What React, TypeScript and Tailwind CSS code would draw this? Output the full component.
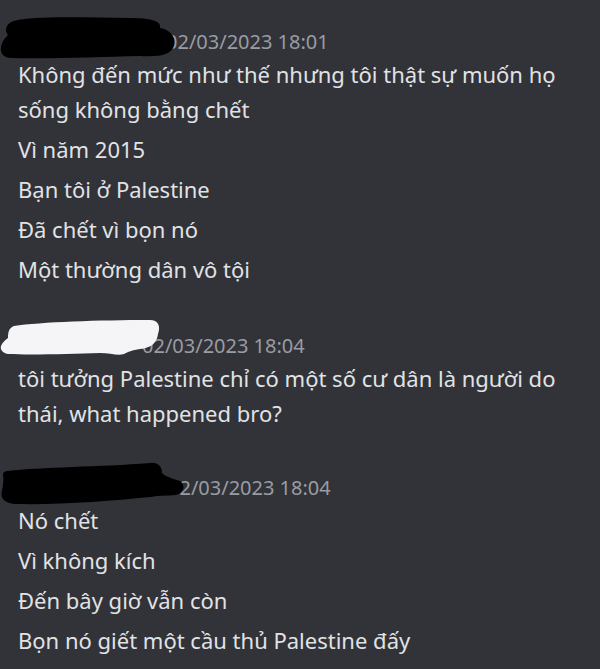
import React from "react";

const font = { fontFamily: '"Noto Sans", "Open Sans", sans-serif' };

function Blob1() {
  return (
    <svg className="absolute left-0 top-[-12px]" width="180" height="46" viewBox="0 0 180 46">
      <path
        d="M14 6 C30 1 80 2 130 3 C150 3 162 6 160 13 C168 14 176 20 174 30 C172 40 160 42 140 41 C100 42 50 44 12 43 C3 43 0 38 1 32 C2 26 6 22 8 20 C4 16 6 8 14 6 Z"
        fill="#000"
      />
    </svg>
  );
}

function Blob2() {
  return (
    <svg className="absolute left-0 top-[-13px]" width="170" height="42" viewBox="0 0 170 42">
      <path
        d="M14 8 C40 4 100 2 150 2 C158 2 161 8 158 16 C157 24 152 30 140 31 C132 32 128 34 124 36 C118 38 110 35 100 35 C70 36 30 37 8 36 C2 35 0 31 1 28 C2 25 5 22 8 20 C8 14 9 10 14 8 Z"
        fill="#f5f5f7"
      />
    </svg>
  );
}

function Blob3() {
  return (
    <svg className="absolute left-0 top-[-12px]" width="190" height="46" viewBox="0 0 190 46">
      <path
        d="M8 10 C40 6 100 6 150 2 C158 1 162 6 162 12 C166 16 174 18 180 20 C186 24 184 32 176 34 C168 35 160 34 150 36 C110 40 60 44 15 43 C4 42 0 37 2 30 C3 24 4 18 3 14 C3 11 5 10 8 10 Z"
        fill="#000"
      />
    </svg>
  );
}

function Header({ pad, ts, blob }: { pad: string; ts: string; blob: React.ReactNode }) {
  return (
    <div className={`relative flex h-[30px] items-center ${pad}`}>
      <span className="text-[20px] leading-[30px] text-[#9a9ca3]">{ts}</span>
      {blob}
    </div>
  );
}

function Lines({ lines }: { lines: string[] }) {
  return (
    <div className="flex flex-col gap-[5px] pl-[18px] pr-[20px]">
      {lines.map((l, i) => (
        <div key={i} className="text-[22px] leading-[35px] text-[#e1e2e5]">
          {l}
        </div>
      ))}
    </div>
  );
}

export default function App() {
  return (
    <div className="h-[669px] w-[600px] overflow-hidden bg-[#313338] pt-[27px]" style={font}>
      <div className="flex flex-col">
        <Header pad="pl-[166px]" ts="02/03/2023 18:01" blob={<Blob1 />} />
        <Lines
          lines={[
            "Không đến mức như thế nhưng tôi thật sự muốn họ sống không bằng chết",
            "Vì năm 2015",
            "Bạn tôi ở Palestine",
            "Đã chết vì bọn nó",
            "Một thường dân vô tội",
          ]}
        />
      </div>
      <div className="mt-[44px] flex flex-col">
        <Header pad="pl-[142px]" ts="02/03/2023 18:04" blob={<Blob2 />} />
        <Lines lines={["tôi tưởng Palestine chỉ có một số cư dân là người do thái, what happened bro?"]} />
      </div>
      <div className="mt-[42px] flex flex-col">
        <Header pad="pl-[168px]" ts="02/03/2023 18:04" blob={<Blob3 />} />
        <Lines
          lines={["Nó chết", "Vì không kích", "Đến bây giờ vẫn còn", "Bọn nó giết một cầu thủ Palestine đấy"]}
        />
      </div>
    </div>
  );
}
